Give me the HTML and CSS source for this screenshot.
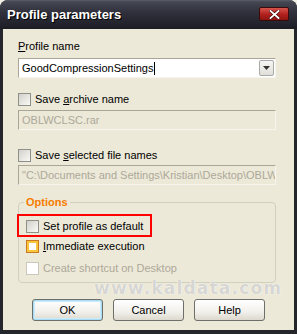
FILE: index.html
```html
<!DOCTYPE html>
<html>
  <head>
    <meta charset="utf-8" />
    <title>Profile parameters</title>
    <link rel="stylesheet" href="styles.css">
  </head>
  <body>
    <div class="window">
      <div class="titlebar">
        <span class="title">Profile parameters</span>
        <span class="close">
          <svg width="11" height="9" viewBox="0 0 11 9">
            <path d="M1.5 1 L9.5 8 M9.5 1 L1.5 8" stroke="#4a0c0c" stroke-width="3.2" stroke-linecap="square"/>
            <path d="M1.5 1 L9.5 8 M9.5 1 L1.5 8" stroke="#fff" stroke-width="1.8" stroke-linecap="square"/>
          </svg>
        </span>
      </div>

      <div class="client">
        <div class="field-label"><u>P</u>rofile name</div>
        <div class="combo">
          <span class="combo-text">GoodCompressionSettings<span class="caret"></span></span>
          <span class="combo-btn">
            <svg width="7" height="4" viewBox="0 0 7 4"><path d="M0 0 H7 L3.5 4 Z" fill="#333"/></svg>
          </span>
        </div>

        <div class="check-row first">
          <span class="check"></span>
          <span>Save <u>a</u>rchive name</span>
        </div>
        <div class="textbox disabled">OBLWCLSC.rar</div>

        <div class="check-row second">
          <span class="check"></span>
          <span>Save <u>s</u>elected file names</span>
        </div>
        <div class="textbox disabled lower">"C:\Documents and Settings\Kristian\Desktop\OBLWCLSC.rar"</div>

        <fieldset class="group">
          <legend>Options</legend>
          <div class="check-row">
            <span class="check"></span>
            <span>Set profile as default</span>
          </div>
          <div class="check-row mid">
            <span class="check hot"></span>
            <span><u>I</u>mmediate execution</span>
          </div>
          <div class="check-row last off">
            <span class="check"></span>
            <span>Create shortcut on Desktop</span>
          </div>
        </fieldset>

        <div class="buttons">
          <span class="btn default">OK</span>
          <span class="btn">Cancel</span>
          <span class="btn">Help</span>
        </div>
      </div>

      <div class="marker"></div>
      <div class="watermark">www.kaldata.com</div>
    </div>
  </body>
</html>
```

FILE: styles.css
```css
html, body {
  margin:0;
  padding:0;
  background-color:#f1efe6;
}

.window {
  position:relative;
  width:297px;
  height:334px;
  box-sizing:border-box;
  display:flex;
  flex-direction:column;
  background-color:#25262c;
  border-radius:8px 8px 0 0;
  overflow:hidden;
  font-family:"Liberation Sans", sans-serif;
  font-size:11px;
  color:#000;
}

.titlebar {
  height:29px;
  flex:none;
  display:flex;
  align-items:center;
  justify-content:space-between;
  padding:0 8px 1px 7px;
  box-sizing:border-box;
  background:linear-gradient(#5b5d6a 0, #444652 2px, #30313c 12px, #1b1c24 100%);
}

.title {
  color:#fff;
  font-weight:bold;
  font-size:13px;
  text-shadow:1px 1px 0 #000;
}

.close {
  width:30px;
  height:14px;
  box-sizing:border-box;
  display:flex;
  align-items:center;
  justify-content:center;
  border:1px solid #3a0b0b;
  border-radius:2px;
  background:linear-gradient(#d6544c, #b0201c 55%, #8e1410);
}

.client {
  flex:1;
  margin:0 3px 4px 3px;
  padding:11px 18px 0 15px;
  background-color:#ece9d8;
  display:flex;
  flex-direction:column;
}

.field-label {
  line-height:13px;
}

.combo {
  margin-top:5px;
  height:20px;
  box-sizing:border-box;
  display:flex;
  align-items:center;
  justify-content:space-between;
  background-color:#fff;
  border:1px solid;
  border-color:#aaa697 #f6f4ec #f6f4ec #aaa697;
  padding:0 1px 0 3px;
}

.combo-text {
  display:flex;
  align-items:center;
}

.caret {
  width:1px;
  height:13px;
  margin-left:1px;
  background-color:#000;
}

.combo-btn {
  width:15px;
  height:16px;
  box-sizing:border-box;
  display:flex;
  align-items:center;
  justify-content:center;
  border:1px solid #a9a9a6;
  border-radius:2px;
  background:linear-gradient(#f6f6f4, #e0dfda);
}

.check-row {
  display:flex;
  align-items:center;
  gap:4px;
  height:13px;
  line-height:13px;
}

.check-row.first {
  margin-top:15px;
}

.check-row.second {
  margin-top:19px;
}

.check-row.mid {
  margin-top:7px;
}

.check-row.last {
  margin-top:9px;
}

.check {
  width:13px;
  height:13px;
  box-sizing:border-box;
  flex:none;
  border:1px solid #8f8f8c;
  background:linear-gradient(135deg, #d2d1ca, #f9f9f7);
}

.check.hot {
  border-color:#c87a22;
  background:#fff;
  box-shadow:inset 0 0 0 2px #fbc53c;
}

.check-row.off {
  color:#aca899;
}

.check-row.off .check {
  border-color:#cac8bb;
  background:#fff;
}

.textbox {
  margin-top:4px;
  height:20px;
  box-sizing:border-box;
  border:1px solid;
  border-color:#aaa697 #f6f4ec #f6f4ec #aaa697;
  padding:0 3px;
  line-height:18px;
  white-space:nowrap;
  overflow:hidden;
}

.textbox.lower {
  margin-top:3px;
}

.textbox.disabled {
  color:#aca899;
}

.group {
  margin:11px 0 0 0;
  padding:11px 0 7px 7px;
  border:1px solid #d0d0bf;
  border-radius:4px;
  min-width:0;
}

.group legend {
  padding:0 2px;
  margin-left:-2px;
  line-height:13px;
  color:#f77b00;
  font-weight:bold;
}

.buttons {
  display:flex;
  gap:10px;
  margin:16px 0 0 14px;
}

.btn {
  width:71px;
  height:22px;
  box-sizing:border-box;
  display:flex;
  align-items:center;
  justify-content:center;
  border:1px solid #6e6e6a;
  border-radius:3px;
  background:linear-gradient(#ffffff, #f1f0eb 60%, #dcd8cd);
}

.btn.default {
  box-shadow:inset 0 0 0 1px #a9dcf3, inset 0 0 0 2px #c8ecfb;
}

.marker {
  position:absolute;
  left:17px;
  top:214px;
  width:135px;
  height:23px;
  box-sizing:border-box;
  border:2px solid #f00;
}

.watermark {
  position:absolute;
  left:94px;
  top:278px;
  font-family:"DejaVu Sans", sans-serif;
  font-weight:bold;
  font-size:17px;
  letter-spacing:1.2px;
  color:rgba(150,148,138,0.4);
  text-shadow:0 0 1px #fff, 0 0 1px #fff;
}
```
